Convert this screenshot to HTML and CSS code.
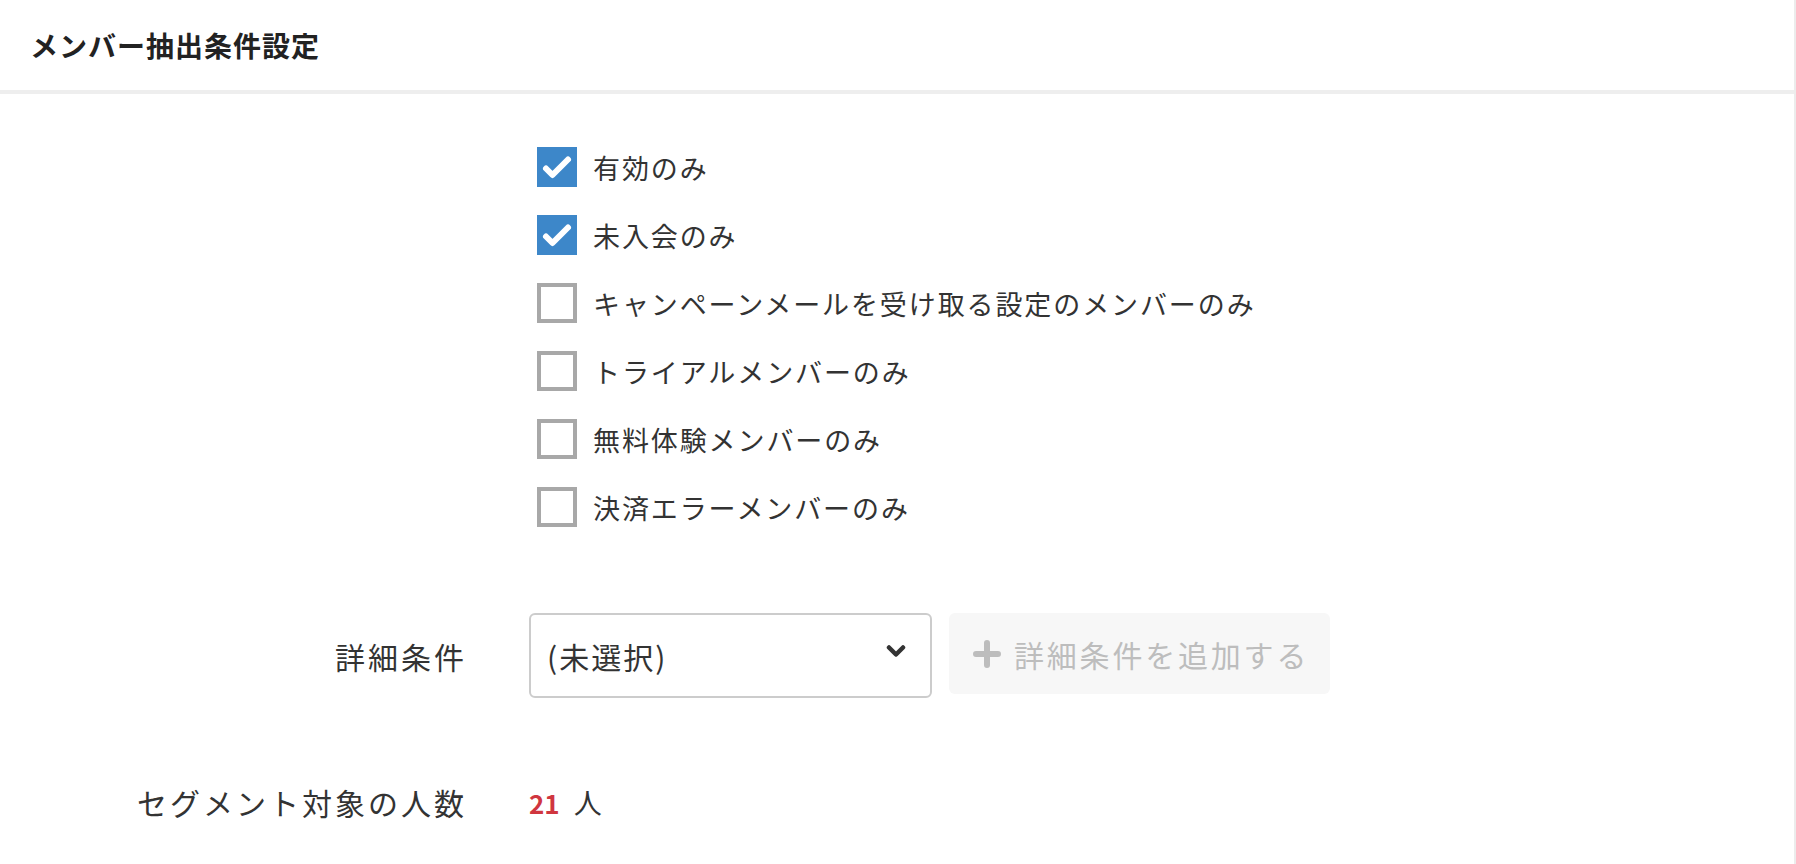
FILE: index.html
```html
<!DOCTYPE html>
<html lang="ja">
<head>
<meta charset="utf-8">
<link rel="stylesheet" href="styles.css">
</head>
<body>
<div class="card">
  <div class="header"><h1 class="title">メンバー抽出条件設定</h1></div>
  <div class="body">
    <div class="checks">
      <label class="check-row"><span class="box checked"><svg viewBox="0 0 40 40" class="tick"><path d="M9 21.5L15.5 28L31 12.5" /></svg></span><span class="check-label">有効のみ</span></label>
      <label class="check-row"><span class="box checked"><svg viewBox="0 0 40 40" class="tick"><path d="M9 21.5L15.5 28L31 12.5" /></svg></span><span class="check-label">未入会のみ</span></label>
      <label class="check-row"><span class="box"></span><span class="check-label">キャンペーンメールを受け取る設定のメンバーのみ</span></label>
      <label class="check-row"><span class="box"></span><span class="check-label">トライアルメンバーのみ</span></label>
      <label class="check-row"><span class="box"></span><span class="check-label">無料体験メンバーのみ</span></label>
      <label class="check-row"><span class="box"></span><span class="check-label">決済エラーメンバーのみ</span></label>
    </div>
    <div class="form-row detail-row">
      <div class="row-label">詳細条件</div>
      <div class="row-field">
        <div class="select">
          <span class="select-text">(未選択)</span>
          <svg class="chevron" viewBox="0 0 20 14"><path d="M3 3.5L10 10.5L17 3.5" /></svg>
        </div>
        <div class="add-btn"><svg class="plus" viewBox="0 0 28 28"><path d="M14 3V25M3 14H25" /></svg><span class="add-text">詳細条件を追加する</span></div>
      </div>
    </div>
    <div class="form-row count-row">
      <div class="row-label">セグメント対象の人数</div>
      <div class="row-field"><span class="count">21</span><span class="unit">人</span></div>
    </div>
  </div>
</div>
</body>
</html>
```

FILE: styles.css
```css
html, body {
  margin: 0;
  padding: 0;
  background: #fff;
}
body {
  font-family: "Noto Sans CJK JP", "Noto Sans", sans-serif;
  color: #333;
}
.card {
  width: 1794px;
  height: 864px;
  border-right: 2px solid #ececec;
  box-sizing: content-box;
}
.header {
  height: 90px;
  border-bottom: 4px solid #eeeeee;
  display: flex;
  align-items: center;
  padding-left: 30px;
}
.title {
  margin: 0;
  font-size: 28px;
  font-weight: 700;
  color: #222;
  letter-spacing: 1px;
}
.body {
  padding-top: 39px;
}
.checks {
  margin-left: 537px;
  display: flex;
  flex-direction: column;
}
.check-row {
  height: 68px;
  display: flex;
  align-items: center;
}
.box {
  width: 40px;
  height: 40px;
  box-sizing: border-box;
  border: 4px solid #a8a8a8;
  background: #fff;
  display: flex;
  align-items: center;
  justify-content: center;
}
.box.checked {
  border: none;
  background: #3d87c9;
}
.tick {
  width: 40px;
  height: 40px;
  fill: none;
  stroke: #fff;
  stroke-width: 6;
  stroke-linecap: round;
  stroke-linejoin: round;
}
.check-label {
  margin-left: 16px;
  font-size: 27px;
  color: #333;
  letter-spacing: 1.9px;
}
.form-row {
  display: grid;
  grid-template-columns: 464px 1fr;
  column-gap: 65px;
  align-items: center;
}
.row-label {
  text-align: right;
  font-size: 30px;
  color: #333;
  letter-spacing: 3px;
  margin-right: -3px;
}
.row-field {
  display: flex;
  align-items: center;
}
.detail-row {
  margin-top: 72px;
}
.select {
  width: 403px;
  height: 85px;
  box-sizing: border-box;
  border: 2px solid #cccccc;
  border-radius: 6px;
  display: flex;
  align-items: center;
  justify-content: space-between;
  padding: 0 24px 0 16px;
}
.select-text {
  font-size: 30px;
  color: #333;
  letter-spacing: 2px;
}
.chevron {
  width: 20px;
  height: 14px;
  fill: none;
  stroke: #333;
  stroke-width: 4.5;
  stroke-linecap: round;
  stroke-linejoin: round;
  margin-bottom: 10px;
}
.add-btn {
  margin-left: 17px;
  width: 381px;
  height: 81px;
  box-sizing: border-box;
  border-radius: 6px;
  background: #f7f7f7;
  display: flex;
  align-items: center;
  padding-left: 24px;
  color: #bdbdbd;
  margin-top: -4px;
}
.plus {
  width: 28px;
  height: 28px;
  fill: none;
  stroke: #bdbdbd;
  stroke-width: 6;
  stroke-linecap: round;
  margin-right: 13px;
}
.add-text {
  font-size: 30px;
  letter-spacing: 2.8px;
}
.count-row {
  margin-top: 82px;
}
.count {
  color: #d0363f;
  font-weight: 700;
  font-size: 26px;
}
.unit {
  margin-left: 14px;
  font-size: 28px;
  color: #333;
}
```
